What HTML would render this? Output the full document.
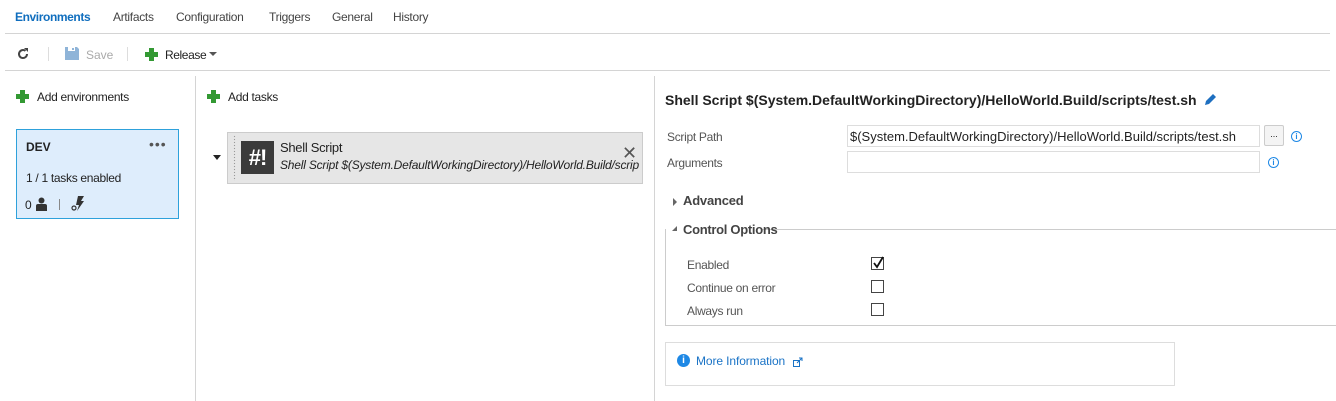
<!DOCTYPE html>
<html><head><meta charset="utf-8"><style>
*{margin:0;padding:0;box-sizing:border-box}
body{width:1336px;height:401px;background:#fff;font-family:"Liberation Sans",sans-serif;font-size:12px;color:#222;position:relative;overflow:hidden}
.a{position:absolute;white-space:nowrap}
.hl{position:absolute;height:1px;background:#d4d4d4}
.vl{position:absolute;width:1px;background:#d4d4d4}
.plus{position:absolute;width:13px;height:13px}
.plus:before{content:"";position:absolute;left:4px;top:0;width:5px;height:13px;background:#339933}
.plus:after{content:"";position:absolute;left:0;top:4px;width:13px;height:5px;background:#339933}
.lbl{color:#555;font-size:12px;letter-spacing:-0.3px}
.cb{position:absolute;width:13px;height:13px;border:1px solid #444;background:#fff}
.info{position:absolute;width:11px;height:11px;border:1px solid #1e88e5;border-radius:50%;color:#1e88e5;font-size:8px;line-height:9px;text-align:center;font-weight:bold}
</style></head><body>
<div class="a" style="left:15px;top:10px;color:#106ebe;font-weight:bold;letter-spacing:-0.4px">Environments</div>
<div class="a" style="left:113px;top:10px;color:#444;letter-spacing:-0.3px">Artifacts</div>
<div class="a" style="left:176px;top:10px;color:#444;letter-spacing:-0.3px">Configuration</div>
<div class="a" style="left:269px;top:10px;color:#444;letter-spacing:-0.3px">Triggers</div>
<div class="a" style="left:332px;top:10px;color:#444;letter-spacing:-0.3px">General</div>
<div class="a" style="left:393px;top:10px;color:#444;letter-spacing:-0.3px">History</div>
<div class="hl" style="left:5px;top:33px;width:1325px"></div>

<svg class="a" style="left:16px;top:47px" width="14" height="14" viewBox="0 0 14 14"><path d="M11 7a4 4 0 1 1-1.5-3.1" fill="none" stroke="#444" stroke-width="2"/><path d="M8 1h4v4z" fill="#444"/></svg>
<div class="vl" style="left:48px;top:47px;height:14px;background:#ddd"></div>
<svg class="a" style="left:65px;top:47px" width="14" height="13" viewBox="0 0 14 13"><path d="M0 0h12l2 2v11H0z" fill="#8fb4d8"/><rect x="3" y="0" width="7" height="4" fill="#fff"/><rect x="7" y="1" width="2" height="2" fill="#8fb4d8"/></svg>
<div class="a" style="left:86px;top:48px;color:#aaa">Save</div>
<div class="vl" style="left:127px;top:47px;height:14px;background:#ddd"></div>
<div class="plus" style="left:145px;top:48px"></div>
<div class="a" style="left:165px;top:48px;color:#222;letter-spacing:-0.4px">Release</div>
<svg class="a" style="left:209px;top:52px" width="9" height="5"><path d="M0 0h8l-4 4z" fill="#555"/></svg>
<div class="hl" style="left:5px;top:70px;width:1325px"></div>

<div class="vl" style="left:195px;top:76px;height:325px"></div>
<div class="vl" style="left:654px;top:76px;height:325px"></div>

<div class="plus" style="left:16px;top:90px"></div>
<div class="a" style="left:37px;top:90px;letter-spacing:-0.3px">Add environments</div>
<div class="a" style="left:16px;top:129px;width:163px;height:90px;background:#deedfc;border:1px solid #2ea1db"></div>
<div class="a" style="left:26px;top:140px;font-weight:bold">DEV</div>
<div class="a" style="left:149px;top:136px;color:#555;font-size:14px;letter-spacing:1px">•••</div>
<div class="a" style="left:26px;top:171px;letter-spacing:-0.3px">1 / 1 tasks enabled</div>
<div class="a" style="left:25px;top:198px">0</div>
<svg class="a" style="left:36px;top:197px" width="11" height="14"><circle cx="5.5" cy="3.5" r="3" fill="#333"/><path d="M0 14V9q0-2 2-2h7q2 0 2 2v5z" fill="#333"/></svg>
<div class="vl" style="left:59px;top:199px;height:11px;background:#888"></div>
<svg class="a" style="left:71px;top:196px" width="14" height="15"><path d="M7 0h6l-3 5h3l-7 10 2-6H5z" fill="#333"/><circle cx="3" cy="12" r="2" fill="none" stroke="#333" stroke-width="1.2"/></svg>

<div class="plus" style="left:207px;top:90px"></div>
<div class="a" style="left:228px;top:90px;letter-spacing:-0.3px">Add tasks</div>
<svg class="a" style="left:213px;top:155px" width="9" height="5"><path d="M0 0h8l-4 5z" fill="#222"/></svg>
<div class="a" style="left:227px;top:132px;width:416px;height:52px;background:#e6e6e6;border:1px solid #ccc;overflow:hidden">
 <div class="a" style="left:5px;top:2px;width:3px;height:46px;background-image:radial-gradient(#999 0.7px,transparent 0.8px);background-size:3px 3px"></div>
 <div class="a" style="left:13px;top:8px;width:33px;height:33px;background:#3b3b3b;color:#fff;font-weight:bold;font-size:22px;line-height:33px;text-align:center;letter-spacing:-1px">#!</div>
 <div class="a" style="left:52px;top:7px;font-size:13px;letter-spacing:-0.3px">Shell Script</div>
 <div class="a" style="left:52px;top:25px;font-style:italic;letter-spacing:-0.2px">Shell Script $(System.DefaultWorkingDirectory)/HelloWorld.Build/scrip</div>
 <div class="a" style="left:394px;top:10px;font-size:18px;color:#555">✕</div>
</div>

<div class="a" style="left:665px;top:92px;font-weight:bold;font-size:14px;letter-spacing:0px">Shell Script $(System.DefaultWorkingDirectory)/HelloWorld.Build/scripts/test.sh</div>
<svg class="a" style="left:1204px;top:92px" width="14" height="14"><path d="M2 9l7-7 3 3-7 7-4 1z" fill="#1e6fc0"/></svg>

<div class="a lbl" style="left:667px;top:130px">Script Path</div>
<div class="a" style="left:847px;top:125px;width:413px;height:22px;border:1px solid #ddd"></div>
<div class="a" style="left:850px;top:129px;font-size:13px;letter-spacing:0px">$(System.DefaultWorkingDirectory)/HelloWorld.Build/scripts/test.sh</div>
<div class="a" style="left:1264px;top:125px;width:20px;height:21px;border:1px solid #ccc;background:#f4f4f4;border-radius:2px;font-size:9px;text-align:center;line-height:17px">...</div>
<div class="info" style="left:1291px;top:131px">i</div>
<div class="a lbl" style="left:667px;top:156px">Arguments</div>
<div class="a" style="left:847px;top:151px;width:413px;height:22px;border:1px solid #ddd"></div>
<div class="info" style="left:1268px;top:157px">i</div>

<svg class="a" style="left:673px;top:198px" width="5" height="8"><path d="M0 0l4 4-4 4z" fill="#666"/></svg>
<div class="a" style="left:683px;top:193px;font-weight:bold;font-size:13px;color:#444;letter-spacing:-0.2px">Advanced</div>

<div class="a" style="left:665px;top:229px;width:700px;height:97px;border-left:1px solid #ccc;border-bottom:1px solid #ccc"></div>
<div class="hl" style="left:762px;top:229px;width:580px;background:#ccc"></div>
<svg class="a" style="left:672px;top:226px" width="6" height="6"><path d="M5 0v5H0z" fill="#666"/></svg>
<div class="a" style="left:683px;top:222px;font-weight:bold;font-size:13px;color:#444;letter-spacing:-0.3px">Control Options</div>
<div class="a lbl" style="left:687px;top:258px">Enabled</div>
<div class="cb" style="left:871px;top:257px"></div>
<svg class="a" style="left:872px;top:256px" width="12" height="13"><path d="M2 7l3 4 6-10" fill="none" stroke="#111" stroke-width="1.8"/></svg>
<div class="a lbl" style="left:687px;top:281px">Continue on error</div>
<div class="cb" style="left:871px;top:280px"></div>
<div class="a lbl" style="left:687px;top:304px">Always run</div>
<div class="cb" style="left:871px;top:303px"></div>

<div class="a" style="left:665px;top:342px;width:510px;height:44px;border:1px solid #ddd"></div>
<div class="a" style="left:677px;top:354px;width:13px;height:13px;border-radius:50%;background:#1e88e5;color:#fff;font-size:10px;font-weight:bold;text-align:center;line-height:13px">i</div>
<div class="a" style="left:696px;top:354px;color:#1a73c6;letter-spacing:-0.1px">More Information</div>
<svg class="a" style="left:793px;top:357px" width="10" height="10"><rect x="0.5" y="3.5" width="6" height="6" fill="none" stroke="#1a73c6"/><path d="M4 6l5-5M6 1h3v3" fill="none" stroke="#1a73c6"/></svg>
</body></html>
